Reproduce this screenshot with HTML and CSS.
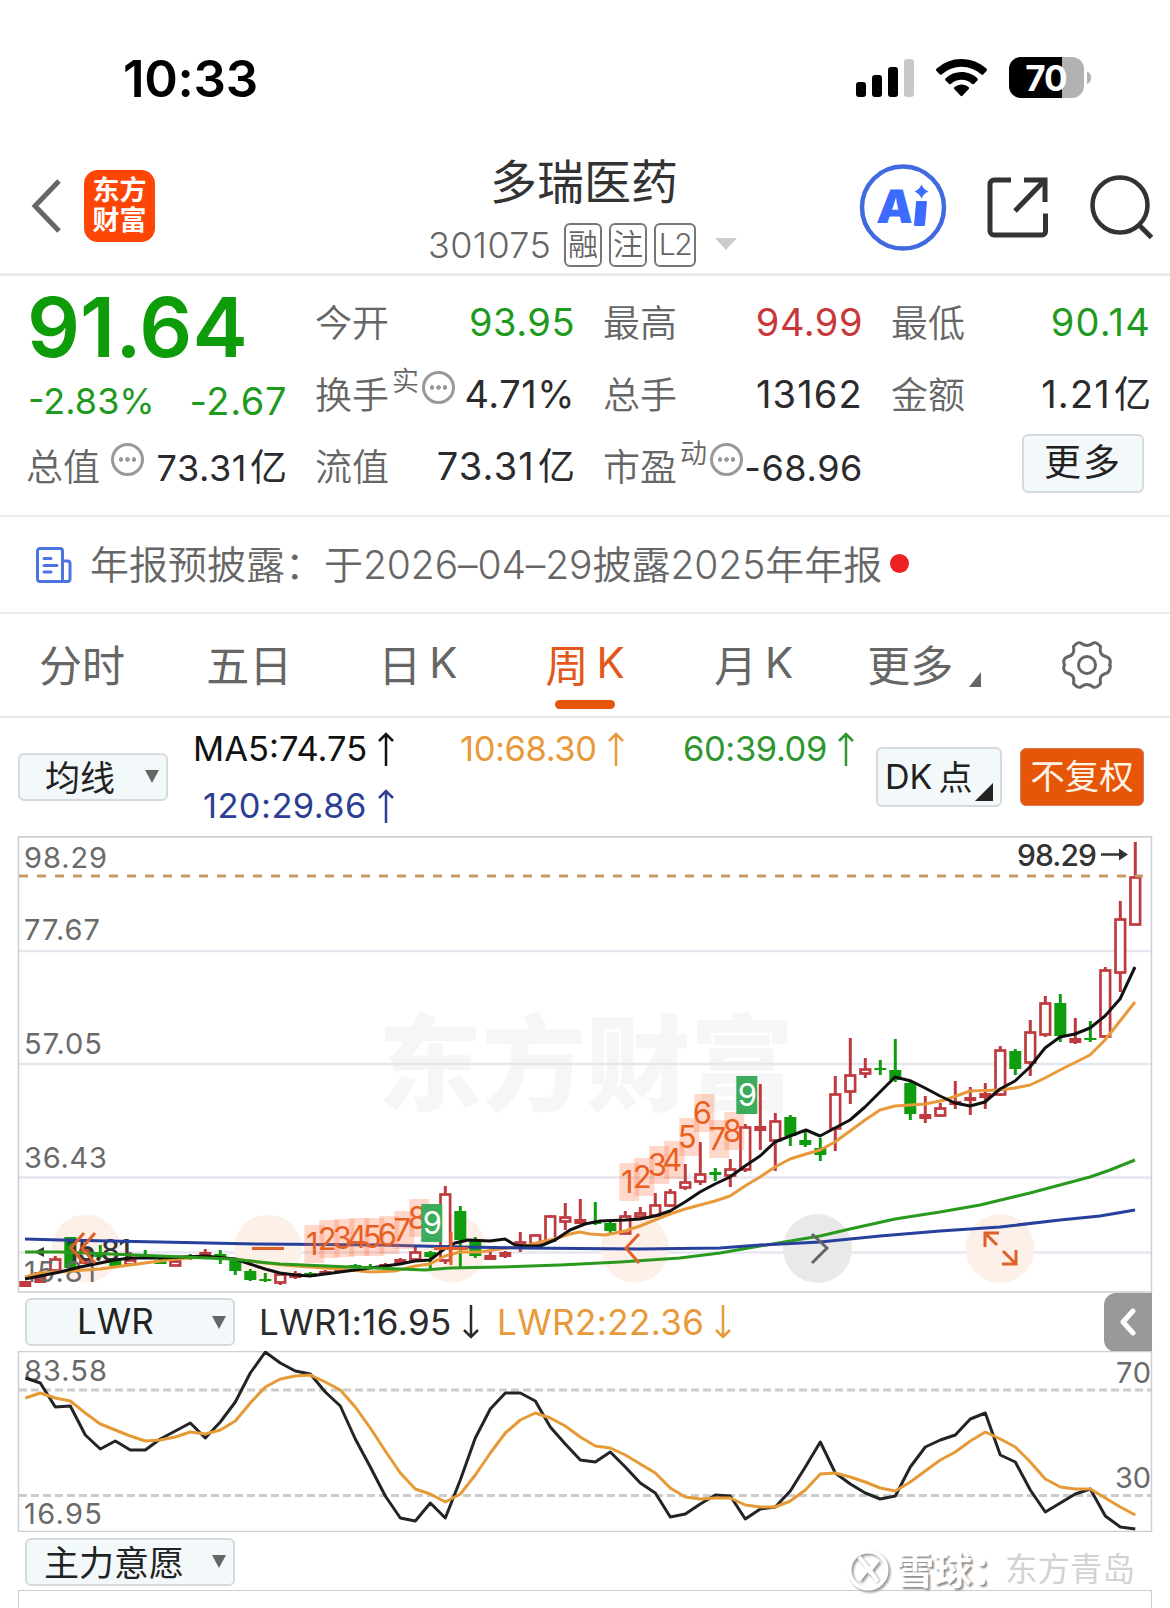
FILE: index.html
```html
<!DOCTYPE html>
<html lang="zh-CN">
<head>
    <meta charset="UTF-8">
    <meta name="viewport" content="width=device-width, initial-scale=1.0">
    <title>多瑞医药 301075</title>
    <link rel="stylesheet" href="styles.css">
</head>
<body>
    <div class="status-bar">
        <span class="time">10:33</span>
        <svg class="status-icons" width="236" height="42" viewBox="856 57 236 42">
            <rect x="856" y="82" width="10" height="15" rx="3"/>
            <rect x="872" y="75" width="10" height="22" rx="3"/>
            <rect x="888" y="67" width="10" height="30" rx="3"/>
            <rect x="904" y="59" width="10" height="38" rx="3" fill="#c8c8c8"/>
            <path d="M961.500 59c9.500 0 18.300 3.600 24.900 9.600q1.200 1.200.1 2.400l-3.100 3.200q-1.100 1.100-2.300 0a29.500 29.500 0 0 0-39.200 0q-1.200 1.100-2.300 0l-3.100-3.200q-1.100-1.200.1-2.400a37 37 0 0 1 24.900-9.600z"/>
            <path d="M961.500 72c6 0 11.600 2.300 15.800 6.200q1.200 1.100.1 2.300l-3.200 3.200q-1.100 1.100-2.300.1a15.600 15.600 0 0 0-20.800 0q-1.200 1-2.300-.1l-3.200-3.200q-1.100-1.200.1-2.300a23.200 23.200 0 0 1 15.800-6.200z"/>
            <path d="M961.500 84.500c2.700 0 5.100 1 7 2.600q1.200 1.100.1 2.200l-6 6.300q-1.100 1.100-2.200 0l-6-6.300q-1.100-1.100.1-2.200a10.700 10.700 0 0 1 7-2.600z"/>
            <path d="M1021 57h41v41h-41a12 12 0 0 1-12-12V69a12 12 0 0 1 12-12z"/>
            <path d="M1062 57h10a12 12 0 0 1 12 12v17a12 12 0 0 1-12 12h-10z" fill="#b2b2b2"/>
            <path d="M1087 71.500c5.500 2 5.500 10.500 0 12.500z" fill="#b2b2b2"/>
            <text class="battery" x="1046" y="90.500" text-anchor="middle">70</text>
        </svg>
    </div>

    <header class="header">
        <div class="header-left">
            <svg width="30" height="54" viewBox="0 0 30 54" fill="none" stroke="#666" stroke-width="5"><path d="M28 2 4 27l24 25"/></svg>
            <div class="logo"><span>东方</span><span>财富</span></div>
        </div>
        <div class="header-title">
            <h1>多瑞医药</h1>
            <div class="code-row">
                <span class="code">301075</span>
                <span class="tag">融</span>
                <span class="tag">注</span>
                <span class="tag tag-l2">L2</span>
                <svg class="code-arrow" width="22" height="12"><path d="M0 0h22L11 12z" fill="#ccc"/></svg>
            </div>
        </div>
        <svg class="header-icons" width="300" height="90" viewBox="858 163 300 90" fill="none" stroke="#333" stroke-width="5">
            <circle cx="903" cy="207.500" r="41" stroke="#4169e1" stroke-width="4.500"/>
            <text class="ai" transform="translate(876 223) skewX(-4)">A</text>
            <path d="M917 202h9l-2 23h-9z" fill="#3b6bff" stroke="#3b6bff" stroke-width="2" stroke-linejoin="round"/>
            <path d="M921.500 184.500q2 5 7 7q-5 2-7 7q-2-5-7-7q5-2 7-7z" fill="#3b6bff" stroke="none"/>
            <path d="M1011 180h-17a4 4 0 0 0-4 4v47a4 4 0 0 0 4 4h48a3.500 3.500 0 0 0 3.500-3.500v-18M1024 180h21v22M1044.500 180.500l-29.500 30.500"/>
            <circle cx="1120" cy="205" r="27.500" stroke-width="4.500"/>
            <path d="M1139 225l12.500 12.500"/>
        </svg>
    </header>

    <section class="quote">
        <div class="price down">91.64</div>
        <div class="cell"><label>今开</label><b class="down">93.95</b></div>
        <div class="cell"><label>最高</label><b class="up">94.99</b></div>
        <div class="cell"><label>最低</label><b class="down wide">90.14</b></div>

        <div class="cell change down"><b>-2.83%</b><b class="amount">-2.67</b></div>
        <div class="cell"><label>换手<sup>实</sup><i class="info"></i></label><b>4.71%</b></div>
        <div class="cell"><label>总手</label><b class="wide">13162</b></div>
        <div class="cell"><label>金额</label><b class="wide">1.21<u>亿</u></b></div>

        <div class="cell small"><label>总值<i class="info gap"></i></label><b>73.31<u>亿</u></b></div>
        <div class="cell"><label>流值</label><b class="wide">73.31<u>亿</u></b></div>
        <div class="cell small"><label>市盈<sup>动</sup><i class="info"></i></label><b>-68.96</b></div>
        <div class="cell"><button class="more-btn">更多</button></div>
    </section>

    <section class="news">
        <svg width="36" height="36" viewBox="0 0 36 36" fill="none" stroke="#4a74e0" stroke-width="3">
            <path d="M26.500 34.500H4a2.500 2.500 0 0 1-2.500-2.500V4A2.500 2.500 0 0 1 4 1.500h20A2.500 2.500 0 0 1 26.500 4zM27 14h4.500a2.500 2.500 0 0 1 2.500 2.500v15.500a2.500 2.500 0 0 1-2.500 2.500H26M8 11.500h7M8 18.500h13M8 25h7" stroke-linecap="round"/>
        </svg>
        <span>年报预披露：于<em>2026–04–29</em>披露<em>2025</em>年年报</span>
        <i class="dot"></i>
    </section>

    <nav class="tabs">
        <a>分时</a>
        <a>五日</a>
        <a>日<span>K</span></a>
        <a class="active">周<span>K</span></a>
        <a class="month">月<span>K</span></a>
        <a class="tab-more">更多<svg width="12" height="15"><path d="M12 0v15H0z" fill="#666"/></svg></a>
        <a class="gear">
            <svg width="50" height="50" viewBox="-25 -25 50 50" fill="none" stroke="#666" stroke-width="3">
                <path d="M-13.500-18.500C-10-22.500-8-23.500-5.500-21.500Q0-17.500 5.500-21.500C8-23.500 10-22.500 13.500-18.500C12.500-12 14-9.500 20-8C23.500-6.500 24-3 22.500 0C24-1 23.500 6.500 20 8C14 9.500 12.500 12 13.500 18.500C10 22.500 8 23.500 5.500 21.500Q0 17.500-5.500 21.500C-8 23.500-10 22.500-13.500 18.500C-12.500 12-14 9.500-20 8C-23.500 6.500-24 3-22.500 0C-24-3-23.500-6.500-20-8C-14-9.500-12.500-12-13.500-18.500Z" stroke-linejoin="round"/>
                <circle r="8.500"/>
            </svg>
        </a>
    </nav>

    <section class="ma-row">
        <button class="select">均线<i class="caret"></i></button>
        <div class="ma-values">
            <span class="ma5">MA5:74.75<svg class="arrow" width="16" height="34"><path d="M8 34V2M1 9l7-7 7 7"/></svg></span>
            <span class="ma10">10:68.30<svg class="arrow" width="16" height="34"><path d="M8 34V2M1 9l7-7 7 7"/></svg></span>
            <span class="ma60">60:39.09<svg class="arrow" width="16" height="34"><path d="M8 34V2M1 9l7-7 7 7"/></svg></span>
            <span class="ma120">120:29.86<svg class="arrow" width="16" height="34"><path d="M8 34V2M1 9l7-7 7 7"/></svg></span>
        </div>
        <button class="dk-btn"><span>DK</span>点<svg width="18" height="18"><path d="M18 0v18H0z" fill="#222"/></svg></button>
        <button class="right-btn">不复权</button>
    </section>

    <svg class="chart" id="kline" width="1170" height="457" viewBox="0 836 1170 457">
        <text class="watermark" x="378" y="1103" textLength="416">东方财富</text>
        <g class="grid">
            <path d="M19 951H1151M19 1064H1151M19 1177.500H1151M19 1252.500H1151"/>
        </g>
        <path d="M18.500 1293V837M1151.500 837V1293M18 1292H1152" class="frame"/>
        <path d="M18 836.500H1152" class="frame frame-top"/>
        <g id="controls">
            <circle cx="86" cy="1248.500" r="34"/>
            <circle cx="268" cy="1248.500" r="34"/>
            <circle cx="452" cy="1248.500" r="34"/>
            <circle cx="635" cy="1248.500" r="34"/>
            <circle cx="817.500" cy="1248.500" r="34.500" class="gray"/>
            <circle cx="1000" cy="1248.500" r="34.500"/>
        </g>
        <g id="candles"></g>
        <g class="axis">
            <text x="24" y="868" textLength="83">98.29</text>
            <text x="24" y="940" textLength="76">77.67</text>
            <text x="24" y="1054" textLength="78">57.05</text>
            <text x="24" y="1168" textLength="83">36.43</text>
            <text x="24" y="1282" textLength="72">15.81</text>
        </g>
        <text class="low-label" x="66" y="1261" textLength="65">15.81</text>
        <path d="M44 1247l-10 5 10 5z" fill="#333"/>
        <g id="lines"></g>
        <path d="M19 876H1143" class="price-line"/>
        <g id="marks"></g>
        <g class="control-icons">
            <path d="M84 1233l-13 15 13 15M95 1233l-13 15 13 15M252 1248.500h32M434 1248.500h34M451 1232v33M639 1234l-13 14 13 15"/>
            <path d="M812 1234l15 14-15 15" stroke="#666"/>
            <path d="M985 1247v-14h14M985 1233l12 12M1003 1251l13 13M1016 1250v14h-14"/>
        </g>
        <text class="high-label" x="1017" y="865.500" textLength="80">98.29</text>
        <path d="M1101 854.500h20" stroke="#333" stroke-width="2.500"/>
        <path d="M1128 854.500l-9-6v12z" fill="#333"/>
    </svg>

    <section class="lwr-row">
        <button class="select wide">LWR<i class="caret"></i></button>
        <span class="lwr1">LWR1:16.95<svg class="arrow" width="16" height="34"><path d="M8 0V32M1 25l7 7 7-7"/></svg></span>
        <span class="lwr2">LWR2:22.36<svg class="arrow" width="16" height="34"><path d="M8 0V32M1 25l7 7 7-7"/></svg></span>
        <button class="expand"><svg width="16" height="28" fill="none" stroke="#fff" stroke-width="5" stroke-linecap="round" stroke-linejoin="round"><path d="M13 3 3 14l10 11"/></svg></button>
    </section>

    <svg class="chart" id="lwr" width="1170" height="181" viewBox="0 1351 1170 181">
        <rect x="18.500" y="1351.500" width="1133" height="180" class="frame"/>
        <path d="M19 1390H1151M19 1495.500H1151" class="dash"/>
        <g class="axis">
            <text x="24" y="1381" textLength="83">83.58</text>
            <text x="24" y="1524" textLength="78">16.95</text>
            <text x="1116" y="1383" textLength="35">70</text>
            <text x="1115" y="1488" textLength="36">30</text>
        </g>
        <g id="lwr-lines"></g>
    </svg>

    <section class="bottom-row">
        <button class="select wide cn">主力意愿<i class="caret"></i></button>
        <div class="credit">
            <svg width="44" height="44" viewBox="-22 -22 44 44" fill="none" stroke="#fff" stroke-width="4">
                <circle r="18.500"/>
                <path d="M-9-13 0-2l-9 12M10-10 2 0l8 12M-3-5 3 4"/>
            </svg>
            <strong>雪球：</strong><span>东方青岛</span>
        </div>
    </section>
    <div class="next-chart"></div>

    <script src="script.js"></script>
</body>
</html>
```

FILE: styles.css
```css
* {
    box-sizing: border-box;
}

body {
    margin: 0;
    width: 1170px;
    height: 1608px;
    overflow: hidden;
    background-color: #fff;
    color: #2b2b2d;
    font-family: Inter, "Noto Sans CJK SC", sans-serif;
}

button {
    font-family: inherit;
    color: #222;
    background-color: #f3f8fa;
    border: 2px solid #d5dadd;
    border-radius: 6px;
    padding: 0;
}

.up {
    color: #c8383a;
}

.down {
    color: #1f9a1f;
}

/* status bar */
.status-bar {
    display: flex;
    justify-content: space-between;
    height: 150px;
    padding: 57px 78px 0 123px;
}

.time {
    font-size: 51px;
    line-height: 43px;
    font-weight: 600;
    color: #000;
    letter-spacing: -0.3px;
}

.battery {
    font-size: 35px;
    font-weight: 700;
    letter-spacing: -1px;
    fill: #fff;
}

/* header */
.header {
    display: flex;
    justify-content: space-between;
    height: 126px;
    padding: 0 12px 0 31px;
    border-bottom: 3px solid #ececec;
}

.header-left {
    display: flex;
    width: 390px;
    gap: 23px;
    padding-top: 20px;
}

.header-left > svg {
    margin-top: 9px;
}

.logo {
    display: flex;
    flex-direction: column;
    align-items: center;
    justify-content: center;
    width: 71px;
    height: 72px;
    border-radius: 14px;
    background-color: #fd4505;
    color: #fff;
    font-size: 27px;
    line-height: 30px;
    font-weight: 700;
}

.header-title {
    flex: 1;
    padding-left: 7px;
}

.header-title h1 {
    margin: 0;
    padding-left: 62px;
    font-size: 47px;
    line-height: 63px;
    font-weight: 400;
    color: #333;
}

.code-row {
    display: flex;
    align-items: center;
    gap: 7px;
    margin-top: 10px;
    color: #666;
}

.code {
    font-size: 36px;
    width: 129px;
    letter-spacing: 0.4px;
    font-weight: 350;
}

.tag {
    width: 38px;
    height: 44px;
    border: 2px solid #777;
    border-radius: 6px;
    font-size: 30px;
    line-height: 39px;
    text-align: center;
    font-weight: 350;
}

.tag-l2 {
    width: 42px;
    font-size: 30px;
    letter-spacing: -1.5px;
}

.code-arrow {
    margin: -3px 0 0 12px;
}

.header-icons {
    margin-top: 13px;
}

.ai {
    font-size: 46px;
    font-weight: 900;
    fill: #3b6bff;
    stroke: none;
}

/* quote */
.quote {
    display: grid;
    grid-template-columns: 259px 258px 258px 258px;
    grid-auto-rows: 72px;
    column-gap: 30px;
    height: 241px;
    padding: 10px 0 0 28px;
    border-bottom: 2px solid #ececec;
}

.price {
    font-size: 83px;
    line-height: 82px;
    font-weight: 600;
    color: #0f9c0b;
    margin-left: -1px;
}

.cell {
    display: flex;
    justify-content: space-between;
    align-items: center;
    font-size: 37px;
    white-space: nowrap;
}

.cell label {
    display: flex;
    align-items: center;
    margin: -3px 0 0 -2px;
    color: #666;
    font-weight: 350;
}

.cell b {
    font-size: 38px;
    line-height: 46px;
    font-weight: 400;
    letter-spacing: 0.5px;
}

.cell b.wide {
    letter-spacing: 1.2px;
}

.cell u {
    margin-left: 3px;
    font-size: 37px;
    line-height: 0;
    text-decoration: none;
    letter-spacing: 0;
}

.small b,
.change b {
    font-size: 36px;
    letter-spacing: 0.6px;
    padding-top: 4px;
}

.change b {
    padding-top: 14px;
    letter-spacing: 0;
}

.change .amount {
    font-size: 38px;
    letter-spacing: 0.6px;
}

.cell sup {
    margin: -22px 0 0 3px;
    font-size: 27px;
    line-height: 1;
    vertical-align: baseline;
}

.info {
    width: 33px;
    height: 33px;
    margin: -11px 0 0 3px;
    border: 3px solid #999;
    border-radius: 50%;
    background: radial-gradient(circle at 7px 50%, #999 2px, transparent 2.500px),
                radial-gradient(circle at 50% 50%, #999 2px, transparent 2.500px),
                radial-gradient(circle at 20px 50%, #999 2px, transparent 2.500px);
}

.info.gap {
    margin-left: 11px;
}

.more-btn {
    width: 122px;
    height: 59px;
    margin: -6px 0 0 129px;
    font-size: 37px;
    line-height: 54px;
    letter-spacing: 2px;
}

/* news */
.news {
    display: flex;
    align-items: center;
    height: 97px;
    padding-left: 36px;
    border-bottom: 2px solid #ececec;
    color: #666;
    font-size: 39px;
    font-weight: 350;
}

.news span {
    margin: -5px 0 0 18px;
}

.news em {
    font-style: normal;
    letter-spacing: -0.1px;
}

.dot {
    width: 19px;
    height: 19px;
    margin: -2px 0 0 8px;
    border-radius: 50%;
    background-color: #ee2024;
}

/* tabs */
.tabs {
    display: grid;
    grid-template-columns: repeat(7, 1fr);
    height: 104px;
    border-bottom: 2px solid #e5eaec;
    color: #666;
}

.tabs a {
    position: relative;
    display: flex;
    align-items: center;
    justify-content: center;
    padding-bottom: 5px;
    font-size: 43px;
}

.tabs a:nth-child(-n+2) {
    padding-right: 3px;
}

.tabs span {
    margin-left: 8px;
    font-size: 42px;
}

.tabs .active {
    color: #e0591b;
}

.tabs .month {
    padding-left: 3px;
}

.tabs .active::after {
    content: "";
    position: absolute;
    bottom: 7px;
    left: 54px;
    width: 60px;
    height: 9px;
    border-radius: 5px;
    background-color: #e65609;
}

.tabs .tab-more {
    padding-left: 10px;
}

.tab-more svg {
    margin: 34px 0 0 16px;
}

.tabs .gear {
    padding: 0 0 1px 2px;
}

/* moving averages */
.ma-row {
    display: flex;
    align-items: center;
    height: 118px;
    padding-left: 18px;
}

.select {
    display: flex;
    align-items: center;
    justify-content: space-between;
    width: 150px;
    height: 48px;
    padding: 0 7px 4px 25px;
    font-size: 35px;
}

.select.wide {
    width: 210px;
    padding: 0 7px 2px 50px;
}

.select.wide.cn {
    padding: 0 7px 4px 17px;
}

.caret {
    margin-top: 3px;
    border: 7.5px solid transparent;
    border-top: 13px solid #666;
    border-bottom: 0;
}

.arrow {
    margin-left: 11px;
    fill: none;
    stroke: currentColor;
    stroke-width: 2.5px;
}

.ma-values {
    display: grid;
    grid-template-columns: 267px 223px 192px;
    grid-auto-rows: 57px;
    width: 682px;
    height: 118px;
    padding-top: 2px;
    margin-left: 25px;
    font-size: 34.5px;
}

.ma-values span,
.lwr-row span {
    display: flex;
    align-items: center;
}

.ma5 {
    color: #111;
}

.ma10,
.lwr2 {
    color: #e89a3a;
}

.ma10,
.ma60 {
    letter-spacing: -0.4px;
}

.ma60 {
    color: #2f962f;
}

.ma120 {
    color: #2c3f94;
    padding-left: 10px;
    letter-spacing: 0.4px;
}

.dk-btn {
    display: flex;
    align-items: center;
    width: 126px;
    height: 60px;
    margin-left: 1px;
    padding: 0 7px 3px 7px;
    font-size: 34px;
    white-space: nowrap;
}

.dk-btn span {
    margin: 2px 6px 0 0;
}

.dk-btn svg {
    margin: 32px 0 0 3px;
}

.right-btn {
    width: 124px;
    height: 58px;
    margin-left: 18px;
    border: 1px solid #d57a55;
    background-color: #e65609;
    color: #fff3e6;
    font-size: 34.5px;
    line-height: 52px;
}

/* charts */
.chart {
    display: block;
}

.frame {
    fill: none;
    stroke: #cccfd2;
    stroke-width: 1.5;
}

.frame-top {
    stroke-width: 2.5;
}

.grid path {
    stroke: #e6e6ee;
    stroke-width: 2.5;
}

.watermark {
    font-size: 104px;
    font-weight: 900;
    fill: #f6f6f6;
}

.axis text {
    font-size: 29px;
    fill: #6a6a6a;
}

.low-label,
.high-label {
    font-size: 30px;
    font-weight: 500;
    fill: #333;
}

.price-line {
    fill: none;
    stroke: #c69a62;
    stroke-width: 3;
    stroke-dasharray: 9 9;
}

.dash {
    fill: none;
    stroke: #ccc;
    stroke-width: 3;
    stroke-dasharray: 8 4;
}

#controls circle {
    fill: #fdf0e9;
}

#controls .gray {
    fill: #e9e9ea;
}

.control-icons path {
    fill: none;
    stroke: #e0602a;
    stroke-width: 3;
}

.control-icons path[stroke] {
    stroke: #666;
}

#lines path,
#lwr-lines path {
    fill: none;
    stroke-width: 3;
    stroke-linejoin: round;
}

#marks rect {
    fill: #ff7040;
    fill-opacity: 0.27;
}

#marks text {
    font-size: 31px;
    fill: #e8601f;
    text-anchor: middle;
}

#marks .nine {
    fill: #3bab5c;
    fill-opacity: 1;
}

#marks .nine-text {
    fill: #fff;
}

/* LWR */
.lwr-row {
    display: flex;
    align-items: center;
    height: 58px;
    padding: 0 18px 0 25px;
    font-size: 35px;
    letter-spacing: 0.4px;
}

.lwr1 {
    width: 238px;
    margin-left: 24px;
}

.expand {
    width: 48px;
    height: 59px;
    margin-left: auto;
    padding-top: 3px;
    border: 0;
    border-radius: 12px 0 0 12px;
    background-color: #999;
}

.bottom-row {
    display: flex;
    justify-content: space-between;
    align-items: center;
    height: 58px;
    padding: 2px 35px 0 25px;
}

.credit {
    display: flex;
    align-items: center;
    margin-top: 16px;
    font-size: 32.5px;
    line-height: 40px;
    color: #d2d2d2;
    white-space: nowrap;
}

.credit svg {
    filter: drop-shadow(2px 2px 1px #999);
}

.credit strong {
    width: 109px;
    margin-left: 6px;
    color: #fff;
    font-size: 38px;
    text-shadow: 2px 2px 2px #888;
}

.next-chart {
    height: 40px;
    margin: 0 18px;
    border: 1.5px solid #cccfd2;
}
```

FILE: script.js
```js
const NS = 'http://www.w3.org/2000/svg';
const RED = '#bf3a3f';
const GREEN = '#0f9c0f';

// r = hollow red, s = solid red, g = green: [type, high, top, bottom, low]
const candles = [
    ['s', 1281, 1281, 1287, 1287], ['s', 1271, 1272, 1283, 1283], ['r', 1256, 1259, 1270, 1272],
    ['g', 1237, 1237, 1268, 1268], ['r', 1248, 1250, 1262, 1264], ['g', 1245, 1254, 1257, 1258],
    ['g', 1257, 1258, 1266, 1266], ['r', 1252, 1260, 1264, 1265], ['g', 1250, 1255, 1257, 1258],
    ['g', 1259, 1260, 1264, 1264], ['r', 1260, 1261, 1265, 1265], ['g', 1254, 1256, 1258, 1260],
    ['s', 1249, 1252, 1257, 1258], ['g', 1250, 1254, 1257, 1264], ['g', 1259, 1260, 1271, 1275],
    ['g', 1269, 1271, 1280, 1281], ['g', 1273, 1279, 1281, 1282], ['r', 1272, 1274, 1282, 1285],
    ['s', 1271, 1273, 1278, 1279], ['g', 1272, 1273, 1277, 1277], ['s', 1270, 1271, 1275, 1275],
    ['s', 1268, 1269, 1272, 1272], ['g', 1264, 1265, 1268, 1268], ['g', 1264, 1266, 1269, 1269],
    ['s', 1263, 1264, 1267, 1267], ['s', 1258, 1259, 1264, 1264], ['r', 1247, 1252, 1259, 1260],
    ['g', 1251, 1252, 1257, 1269], ['r', 1186, 1194, 1260, 1264], ['g', 1206, 1211, 1240, 1268],
    ['g', 1237, 1240, 1256, 1258], ['s', 1250, 1255, 1260, 1260], ['s', 1251, 1252, 1257, 1258],
    ['r', 1232, 1242, 1245, 1252], ['r', 1234, 1235, 1243, 1243], ['r', 1215, 1216, 1240, 1242],
    ['r', 1203, 1217, 1221, 1230], ['s', 1199, 1219, 1224, 1224], ['g', 1202, 1222, 1224, 1225],
    ['g', 1221, 1223, 1231, 1233], ['r', 1211, 1216, 1233, 1234], ['r', 1207, 1213, 1216, 1217],
    ['r', 1193, 1205, 1215, 1215], ['r', 1189, 1192, 1205, 1207], ['r', 1164, 1182, 1187, 1190],
    ['r', 1142, 1174, 1181, 1185], ['g', 1168, 1172, 1175, 1181], ['r', 1159, 1169, 1175, 1187],
    ['r', 1124, 1127, 1169, 1172], ['s', 1084, 1126, 1131, 1150], ['r', 1113, 1121, 1140, 1171],
    ['g', 1115, 1117, 1136, 1146], ['g', 1131, 1140, 1145, 1147], ['g', 1138, 1148, 1155, 1161],
    ['r', 1076, 1094, 1128, 1151], ['r', 1038, 1075, 1091, 1104], ['r', 1058, 1069, 1073, 1078],
    ['g', 1060, 1068, 1070, 1075], ['g', 1039, 1070, 1080, 1082], ['g', 1081, 1083, 1114, 1120],
    ['s', 1096, 1114, 1119, 1123], ['r', 1103, 1108, 1115, 1117], ['s', 1081, 1101, 1105, 1109],
    ['s', 1087, 1097, 1101, 1115], ['s', 1083, 1093, 1098, 1109], ['r', 1046, 1050, 1094, 1096],
    ['g', 1049, 1051, 1069, 1075], ['r', 1020, 1032, 1062, 1076], ['r', 996, 1003, 1034, 1037],
    ['g', 994, 1003, 1036, 1042], ['s', 1018, 1038, 1043, 1044], ['g', 1021, 1038, 1040, 1042],
    ['r', 967, 970, 1036, 1037], ['r', 901, 919, 972, 992], ['r', 842, 877, 924, 925]
];

const lines = {
    '#e89a3a': '25,1277 40,1273 100,1269 130,1265 175,1259 205,1257 235,1259 265,1263 295,1266 340,1269 370,1272 395,1271 415,1266 430,1264 445,1256 460,1252 480,1252 500,1249 525,1246 540,1242 555,1239 570,1234 580,1232 590,1234 605,1235 625,1231 640,1226 655,1220 670,1214 685,1209 700,1205 715,1201 730,1196 745,1186 760,1177 775,1167 790,1159 806,1154 820,1150 835,1142 865,1120 880,1110 895,1106 925,1104 945,1100 970,1091 1000,1090 1015,1088 1030,1085 1045,1078 1060,1070 1090,1055 1105,1040 1120,1021 1135,1002',
    '#111': '25,1279 40,1276 60,1272 80,1267 100,1263 115,1260 130,1258 160,1258 205,1256 235,1259 250,1264 265,1269 280,1273 295,1275 310,1276 325,1274 340,1272 355,1270 370,1268 385,1266 400,1264 415,1261 430,1260 443,1250 455,1243 468,1240 490,1241 505,1239 515,1245 525,1246 540,1246 555,1240 570,1230 585,1224 600,1221 625,1220 640,1219 655,1216 670,1211 685,1202 700,1192 715,1184 730,1177 745,1166 760,1156 775,1142 790,1136 806,1130 820,1136 850,1120 865,1107 880,1092 895,1077 911,1081 925,1088 940,1096 955,1103 970,1106 985,1102 1000,1089 1015,1081 1030,1067 1045,1048 1060,1037 1075,1034 1090,1028 1105,1016 1120,999 1135,967',
    '#2a9a1e': '25,1252 60,1252 160,1256 230,1259 280,1264 350,1267 400,1269 425,1270 450,1268 500,1267 560,1265 620,1262 680,1258 720,1253 760,1246 820,1236 850,1229 895,1219 940,1212 980,1205 1030,1193 1060,1185 1090,1177 1110,1170 1135,1160',
    '#27409c': '25,1239 60,1240 160,1242 260,1244 380,1245 460,1247 520,1248 640,1249 720,1248 760,1245 820,1242 880,1236 940,1231 1000,1227 1060,1220 1100,1216 1135,1210'
};

// one value for each week
const lwr1 = [1378, 1383, 1407, 1406, 1435, 1449, 1441, 1450, 1450, 1439, 1431, 1423, 1438, 1422, 1402, 1373, 1352, 1363, 1371, 1374, 1392, 1406, 1439, 1467, 1496, 1518, 1521, 1503, 1518, 1480, 1438, 1409, 1393, 1393, 1401, 1427, 1444, 1460, 1462, 1452, 1467, 1483, 1493, 1517, 1514, 1504, 1495, 1496, 1519, 1509, 1507, 1491, 1467, 1442, 1473, 1484, 1493, 1499, 1496, 1467, 1447, 1440, 1435, 1419, 1413, 1455, 1462, 1490, 1512, 1503, 1494, 1489, 1516, 1527, 1529];
const lwr2 = [1398, 1393, 1398, 1401, 1413, 1424, 1430, 1436, 1441, 1440, 1437, 1432, 1434, 1430, 1421, 1403, 1387, 1379, 1376, 1375, 1382, 1390, 1407, 1428, 1451, 1473, 1489, 1494, 1502, 1494, 1475, 1453, 1433, 1420, 1413, 1418, 1426, 1437, 1446, 1448, 1455, 1464, 1473, 1488, 1497, 1499, 1498, 1498, 1505, 1507, 1507, 1501, 1490, 1474, 1473, 1477, 1482, 1488, 1491, 1482, 1471, 1460, 1452, 1441, 1432, 1439, 1447, 1462, 1479, 1487, 1489, 1489, 1498, 1507, 1515];

// nine-count marks: first candle index and the centre of each digit
const marks = [
    [19, [1244, 1239, 1238, 1237, 1237, 1235, 1230, 1218, 1223]],
    [40, [1182, 1177, 1165, 1160, 1137, 1113, 1139, 1131, 1095]]
];

function candleX(i) {
    return 25.3 + i * 15;
}

function add(parentId, tag, attrs, text) {
    const el = document.createElementNS(NS, tag);
    for (const key in attrs) {
        el.setAttribute(key, attrs[key]);
    }
    if (text) {
        el.textContent = text;
    }
    document.getElementById(parentId).appendChild(el);
}

candles.forEach(function([type, high, top, bottom, low], i) {
    const x = candleX(i);
    const color = type === 'g' ? GREEN : RED;
    if (type === 'r') {
        add('candles', 'path', { d: `M${x} ${high}V${top}M${x} ${bottom}V${low}`, stroke: color, 'stroke-width': 3 });
        add('candles', 'rect', { x: x - 4.8, y: top + 0.5, width: 9.6, height: bottom - top, fill: '#fff', stroke: color, 'stroke-width': 2.7 });
    } else {
        add('candles', 'path', { d: `M${x} ${high}V${low}`, stroke: color, 'stroke-width': 3 });
        add('candles', 'rect', { x: x - 6, y: top, width: 12, height: bottom - top, fill: color });
    }
});

for (const color in lines) {
    add('lines', 'path', { d: 'M' + lines[color].split(' ').join('L'), stroke: color });
}

marks.forEach(function([start, ys]) {
    ys.forEach(function(y, n) {
        const x = candleX(start + n);
        const nine = n === 8;
        add('marks', 'rect', { x: nine ? x - 9 : x - 6, y: y - 19, width: nine ? 21 : 20, height: 38, class: nine ? 'nine' : '' });
        add('marks', 'text', { x: x + 2, y: y + 11, class: nine ? 'nine-text' : '' }, String(n + 1));
    });
});

function drawLwr(values, color) {
    add('lwr-lines', 'path', { d: 'M' + values.map((y, i) => candleX(i) + ' ' + y).join('L'), stroke: color });
}

drawLwr(lwr1, '#222426');
drawLwr(lwr2, '#e59a35');
```
